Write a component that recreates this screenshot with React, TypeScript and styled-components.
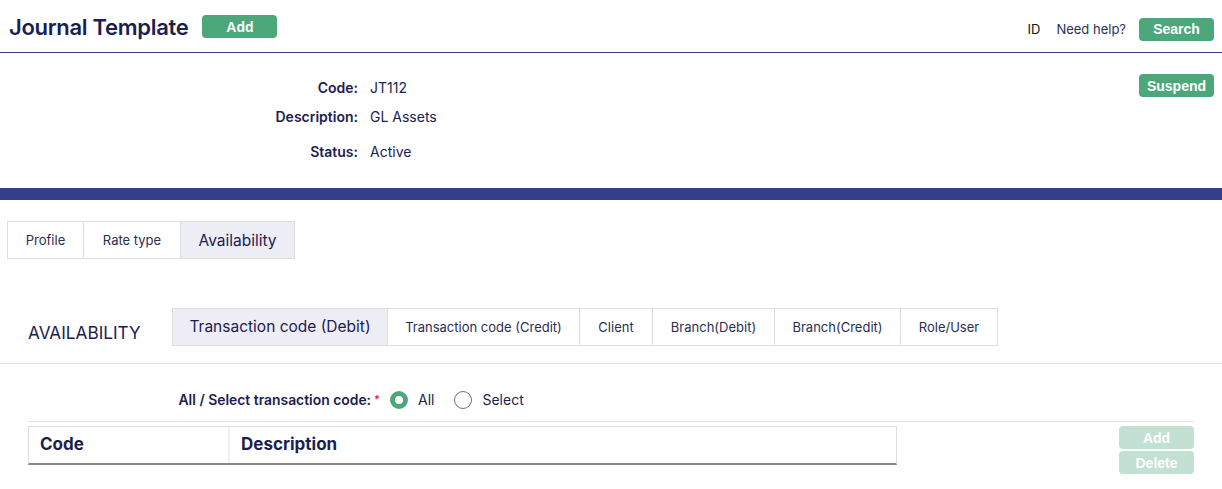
import React from "react";
import styled, { createGlobalStyle } from "styled-components";

const Global = createGlobalStyle`
  body { margin: 0; font-family: Inter, "Noto Sans", Arial, sans-serif; color: #1c2150; background: #fff; }
  * { box-sizing: border-box; }
`;

const Page = styled.div`
  width: 1222px;
  height: 489px;
  overflow: hidden;
`;

const Header = styled.header`
  height: 53px;
  border-bottom: 1px solid #34409a;
  display: flex;
  align-items: center;
  padding: 1px 8px 0 9px;
`;

const Title = styled.h1`
  margin: 0;
  font-size: 22px;
  font-weight: 600;
  color: #1b1f4f;
  letter-spacing: -0.3px;
`;

const GreenButton = styled.button<{ $disabled?: boolean; $w?: number }>`
  width: ${(p) => p.$w ?? 75}px;
  height: 23px;
  border: none;
  border-radius: 4px;
  background: ${(p) => (p.$disabled ? "#c3e1d2" : "#4ca87a")};
  color: #fff;
  font-family: Arial, "Liberation Sans", sans-serif;
  font-weight: 700;
  font-size: 14px;
  padding: 0;
  cursor: pointer;
`;

const TitleAdd = styled(GreenButton)`
  margin-left: 14px;
`;

const Spacer = styled.div`
  flex: 1;
`;

const HeaderRight = styled.div`
  display: flex;
  align-items: center;
  margin-top: 5px;
  font-size: 13px;
`;

const IdText = styled.span`
  color: #111;
  margin-right: 16px;
`;

const HelpText = styled.span`
  color: #2b2f55;
  margin-right: 13px;
`;

const Details = styled.section`
  height: 135px;
  display: flex;
  padding-right: 8px;
`;

const DetailGrid = styled.div`
  display: grid;
  grid-template-columns: 358px auto;
  column-gap: 12px;
  align-content: start;
  padding-top: 26px;
  font-size: 14px;
`;

const Label = styled.div<{ $h: number }>`
  text-align: right;
  font-weight: 600;
  color: #1c2150;
  height: ${(p) => p.$h}px;
`;

const Value = styled.div<{ $h: number }>`
  color: #1c2150;
  height: ${(p) => p.$h}px;
`;

const SuspendWrap = styled.div`
  margin-left: auto;
  padding-top: 21px;
`;

const Bar = styled.div`
  height: 12px;
  background: #333f8a;
`;

const Tabs = styled.div`
  display: flex;
  margin: 21px 0 0 7px;
`;

const Tab = styled.div<{ $active?: boolean; $w: number }>`
  width: ${(p) => p.$w}px;
  height: 38px;
  display: flex;
  align-items: center;
  justify-content: center;
  border: 1px solid #dedede;
  margin-left: -1px;
  background: ${(p) => (p.$active ? "#ededf6" : "#fff")};
  font-size: ${(p) => (p.$active ? "15.5px" : "13px")};
  color: ${(p) => (p.$active ? "#1c2150" : "#2a2e50")};
  &:first-child { margin-left: 0; }
`;

const AvailRow = styled.div`
  display: flex;
  align-items: center;
  margin-top: 48px;
  height: 39px;
  border-bottom: 1px solid #e2e2e2;
  box-sizing: content-box;
  padding-bottom: 17px;
`;

const AvailLabel = styled.div`
  width: 172px;
  padding-left: 28px;
  font-size: 17.2px;
  margin-top: 11px;
  color: #1c2150;
`;

const SubTabs = styled.div`
  display: flex;
`;

const RadioRow = styled.div`
  display: flex;
  align-items: center;
  height: 58px;
  padding-top: 14px;
  margin: 0 28px;
  border-bottom: 1px solid #e2e2e2;
  font-size: 14px;
`;

const RadioLabel = styled.div`
  width: 352px;
  text-align: right;
  font-weight: 600;
  color: #1c2150;
  font-size: 13.9px;
`;

const Star = styled.span`
  color: #e0245e;
  margin-left: 3px;
  vertical-align: 2px;
  font-size: 11px;
`;

const RadioOption = styled.label`
  display: flex;
  align-items: center;
  gap: 10px;
  margin-left: 10px;
  margin-right: 10px;
  color: #1c2150;
`;

const RadioCircle = styled.span<{ $checked?: boolean }>`
  width: 18px;
  height: 18px;
  border-radius: 50%;
  border: ${(p) => (p.$checked ? "5px solid #4ca87a" : "1px solid #707070")};
  background: #fff;
  display: inline-block;
`;

const TableArea = styled.div`
  display: flex;
  padding: 4px 28px 0 28px;
`;

const Table = styled.div`
  width: 869px;
  height: 39px;
  display: flex;
  border: 1px solid #dedede;
  border-bottom: 2px solid #888;
`;

const HeadCell = styled.div<{ $w?: number }>`
  ${(p) => (p.$w ? `width: ${p.$w}px;` : "flex: 1;")}
  display: flex;
  align-items: center;
  padding: 0 0 3px 11px;
  font-size: 17px;
  font-weight: 700;
  color: #1b1f4f;
  & + & { border-left: 2px solid #f0f0f0; }
`;

const SideButtons = styled.div`
  margin-left: auto;
  display: flex;
  flex-direction: column;
  gap: 2px;
`;

export default function App() {
  return (
    <Page>
      <Global />
      <Header>
        <Title>Journal Template</Title>
        <TitleAdd>Add</TitleAdd>
        <Spacer />
        <HeaderRight>
          <IdText>ID</IdText>
          <HelpText>Need help?</HelpText>
          <GreenButton $w={75}>Search</GreenButton>
        </HeaderRight>
      </Header>
      <Details>
        <DetailGrid>
          <Label $h={29}>Code:</Label>
          <Value $h={29}>JT112</Value>
          <Label $h={35}>Description:</Label>
          <Value $h={35}>GL Assets</Value>
          <Label $h={20}>Status:</Label>
          <Value $h={20}>Active</Value>
        </DetailGrid>
        <SuspendWrap>
          <GreenButton $w={75}>Suspend</GreenButton>
        </SuspendWrap>
      </Details>
      <Bar />
      <Tabs>
        <Tab $w={77}>Profile</Tab>
        <Tab $w={98}>Rate type</Tab>
        <Tab $w={115} $active>Availability</Tab>
      </Tabs>
      <AvailRow>
        <AvailLabel>AVAILABILITY</AvailLabel>
        <SubTabs>
          <Tab $w={216} $active>Transaction code (Debit)</Tab>
          <Tab $w={193}>Transaction code (Credit)</Tab>
          <Tab $w={74}>Client</Tab>
          <Tab $w={123}>Branch(Debit)</Tab>
          <Tab $w={127}>Branch(Credit)</Tab>
          <Tab $w={98}>Role/User</Tab>
        </SubTabs>
      </AvailRow>
      <RadioRow>
        <RadioLabel>
          All / Select transaction code:<Star>*</Star>
        </RadioLabel>
        <RadioOption>
          <RadioCircle $checked />
          All
        </RadioOption>
        <RadioOption>
          <RadioCircle />
          Select
        </RadioOption>
      </RadioRow>
      <TableArea>
        <Table>
          <HeadCell $w={199}>Code</HeadCell>
          <HeadCell>Description</HeadCell>
        </Table>
        <SideButtons>
          <GreenButton $disabled>Add</GreenButton>
          <GreenButton $disabled>Delete</GreenButton>
        </SideButtons>
      </TableArea>
    </Page>
  );
}
